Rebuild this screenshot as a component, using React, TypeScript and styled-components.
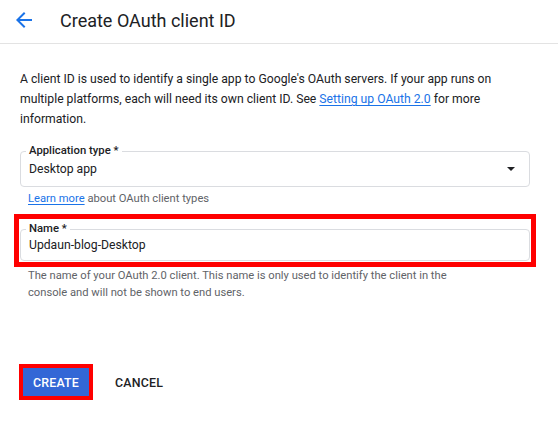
import React from "react";
import styled, { createGlobalStyle } from "styled-components";

const GlobalStyle = createGlobalStyle`
  html, body {
    margin: 0;
    padding: 0;
    background: #ffffff;
  }
  body {
    font-family: Roboto, "Noto Sans", Arial, sans-serif;
    color: #202124;
    -webkit-font-smoothing: antialiased;
  }
`;

const Page = styled.div`
  width: 558px;
  min-height: 426px;
  background: #fff;
`;

const Header = styled.header`
  display: flex;
  align-items: center;
  height: 40px;
  padding-bottom: 3px;
  border-bottom: 1px solid #e3e3e3;
`;

const BackButton = styled.button`
  display: flex;
  align-items: center;
  justify-content: center;
  width: 24px;
  height: 24px;
  margin-left: 12px;
  padding: 0;
  border: none;
  background: none;
  color: #1a73e8;
  cursor: pointer;
`;

const Title = styled.h1`
  margin: 0 0 0 24px;
  font-size: 18px;
  font-weight: 400;
  color: #202124;
  letter-spacing: 0;
`;

const Main = styled.main`
  padding: 25px 28px 0 20px;
`;

const Intro = styled.p`
  margin: 0;
  font-size: 12.2px;
  line-height: 20px;
  color: #202124;
`;

const Link = styled.a`
  color: #1a73e8;
  text-decoration: underline;
  text-underline-offset: 2px;
`;

const FieldBox = styled.div<{ $height: number }>`
  position: relative;
  display: flex;
  align-items: center;
  height: ${(p) => p.$height}px;
  box-sizing: border-box;
  padding: 0 8px;
  border: 1px solid #dadce0;
  border-radius: 4px;
  font-size: 12.2px;
  color: #202124;
`;

const FloatLabel = styled.span`
  position: absolute;
  left: 5px;
  top: -8px;
  padding: 0 3px;
  background: #fff;
  font-size: 11.3px;
  line-height: 14px;
  font-weight: 500;
  color: #202124;
`;

const Value = styled.span`
  flex: 1;
`;

const Caret = styled.span`
  width: 0;
  height: 0;
  margin-right: 6px;
  border-left: 4px solid transparent;
  border-right: 4px solid transparent;
  border-top: 4px solid #202124;
`;

const SelectField = styled.div`
  margin-top: 22px;
`;

const Hint = styled.div<{ $top: number }>`
  margin-top: ${(p) => p.$top}px;
  font-size: 11.2px;
  line-height: 17px;
  color: #5f6368;
  padding-left: 8px;
`;

const Highlight = styled.div<{ $thick: number }>`
  border: ${(p) => p.$thick}px solid #ff0000;
`;

const NameHighlight = styled(Highlight)`
  margin: 7px -6px 0 -6px;
  padding: 10px 1px 1px 1px;
`;

const Actions = styled.div`
  display: flex;
  align-items: center;
  gap: 12px;
  margin-top: 63px;
  margin-left: -1px;
`;

const ButtonBase = styled.button`
  height: 28px;
  padding: 0 10px;
  border: none;
  border-radius: 2px;
  font-family: Roboto, "Noto Sans", Arial, sans-serif;
  font-size: 12.4px;
  font-weight: 500;
  letter-spacing: 0.2px;
  text-transform: uppercase;
  cursor: pointer;
`;

const PrimaryButton = styled(ButtonBase)`
  display: block;
  width: 66px;
  padding: 0;
  background: #3367d6;
  color: #fff;
  border-radius: 0;
`;

const TextButton = styled(ButtonBase)`
  background: transparent;
  color: #202124;
`;

export default function App() {
  return (
    <Page>
      <GlobalStyle />
      <Header>
        <BackButton aria-label="Back">
          <svg width="24" height="24" viewBox="0 0 24 24" fill="currentColor">
            <path d="M20 11H7.83l5.59-5.59L12 4l-8 8 8 8 1.41-1.41L7.83 13H20v-2z" />
          </svg>
        </BackButton>
        <Title>Create OAuth client ID</Title>
      </Header>
      <Main>
        <Intro>
          A client ID is used to identify a single app to Google's OAuth servers. If your app runs on
          <br />
          multiple platforms, each will need its own client ID. See{" "}
          <Link href="#">Setting up OAuth 2.0</Link> for more
          <br />
          information.
        </Intro>

        <SelectField>
          <FieldBox $height={36}>
            <FloatLabel>Application type *</FloatLabel>
            <Value>Desktop app</Value>
            <Caret />
          </FieldBox>
          <Hint $top={3}>
            <Link href="#">Learn more</Link> about OAuth client types
          </Hint>
        </SelectField>

        <NameHighlight $thick={5}>
          <FieldBox $height={32}>
            <FloatLabel>Name *</FloatLabel>
            <Value>Updaun-blog-Desktop</Value>
          </FieldBox>
        </NameHighlight>
        <Hint $top={0}>
          The name of your OAuth 2.0 client. This name is only used to identify the client in the
          <br />
          console and will not be shown to end users.
        </Hint>

        <Actions>
          <Highlight $thick={4}>
            <PrimaryButton>Create</PrimaryButton>
          </Highlight>
          <TextButton>Cancel</TextButton>
        </Actions>
      </Main>
    </Page>
  );
}
